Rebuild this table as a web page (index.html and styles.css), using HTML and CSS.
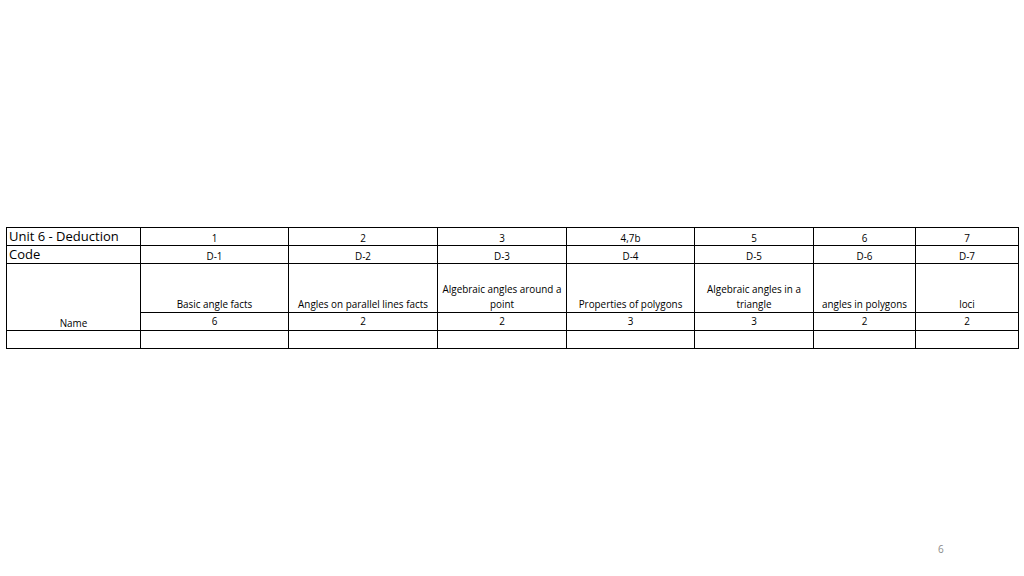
FILE: index.html
```html
<!DOCTYPE html>
<html>
<head>
<meta charset="utf-8">
<link rel="stylesheet" href="styles.css">
</head>
<body>
<div class="slide">
  <table class="grid">
    <colgroup>
      <col class="c0"><col class="c1"><col class="c2"><col class="c3"><col class="c4"><col class="c5"><col class="c6"><col class="c7">
    </colgroup>
    <tr class="r1">
      <td class="head">Unit 6 - Deduction</td>
      <td>1</td><td>2</td><td>3</td><td>4,7b</td><td>5</td><td>6</td><td>7</td>
    </tr>
    <tr class="r2">
      <td class="head">Code</td>
      <td>D-1</td><td>D-2</td><td>D-3</td><td>D-4</td><td>D-5</td><td>D-6</td><td>D-7</td>
    </tr>
    <tr class="r3">
      <td class="name" rowspan="2">Name</td>
      <td>Basic angle facts</td>
      <td>Angles on parallel lines facts</td>
      <td>Algebraic angles around a point</td>
      <td>Properties of polygons</td>
      <td>Algebraic angles in a triangle</td>
      <td>angles in polygons</td>
      <td>loci</td>
    </tr>
    <tr class="r4">
      <td>6</td><td>2</td><td>2</td><td>3</td><td>3</td><td>2</td><td>2</td>
    </tr>
    <tr class="r5">
      <td></td><td></td><td></td><td></td><td></td><td></td><td></td><td></td>
    </tr>
  </table>
  <div class="pagenum">6</div>
</div>
</body>
</html>
```
FILE: styles.css
```css
html, body {
  margin: 0;
  padding: 0;
  background: #ffffff;
}
.slide {
  width: 1024px;
  height: 576px;
  position: relative;
  overflow: hidden;
  font-family: "Open Sans", "Liberation Sans", Arial, sans-serif;
  color: #000;
}
.grid {
  border-collapse: collapse;
  table-layout: fixed;
  width: 1012px;
  margin: 227px 0 0 6px;
}
.c0 { width: 134px; }
.c1 { width: 148px; }
.c2 { width: 149px; }
.c3 { width: 129px; }
.c4 { width: 128px; }
.c5 { width: 119px; }
.c6 { width: 102px; }
.c7 { width: 103px; }
.grid td {
  border: 1px solid #000;
  padding: 0 1px;
  font-size: 9.9px;
  line-height: 13px;
  text-align: center;
  vertical-align: bottom;
  overflow: hidden;
}
.r1 td, .r2 td { height: 17px; }
.r3 td { height: 48px; line-height: 15px; }
.r4 td { height: 17px; line-height: 16px; vertical-align: top; }
.r5 td { height: 17px; }
.grid td.head {
  text-align: left;
  font-size: 13px;
  line-height: 17px;
  vertical-align: top;
  padding: 0 2px;
}
.grid td.name {
  vertical-align: bottom;
  line-height: 13px;
}
.pagenum {
  position: absolute;
  left: 938px;
  top: 542px;
  font-size: 10px;
  color: #8a8a8a;
}
```
